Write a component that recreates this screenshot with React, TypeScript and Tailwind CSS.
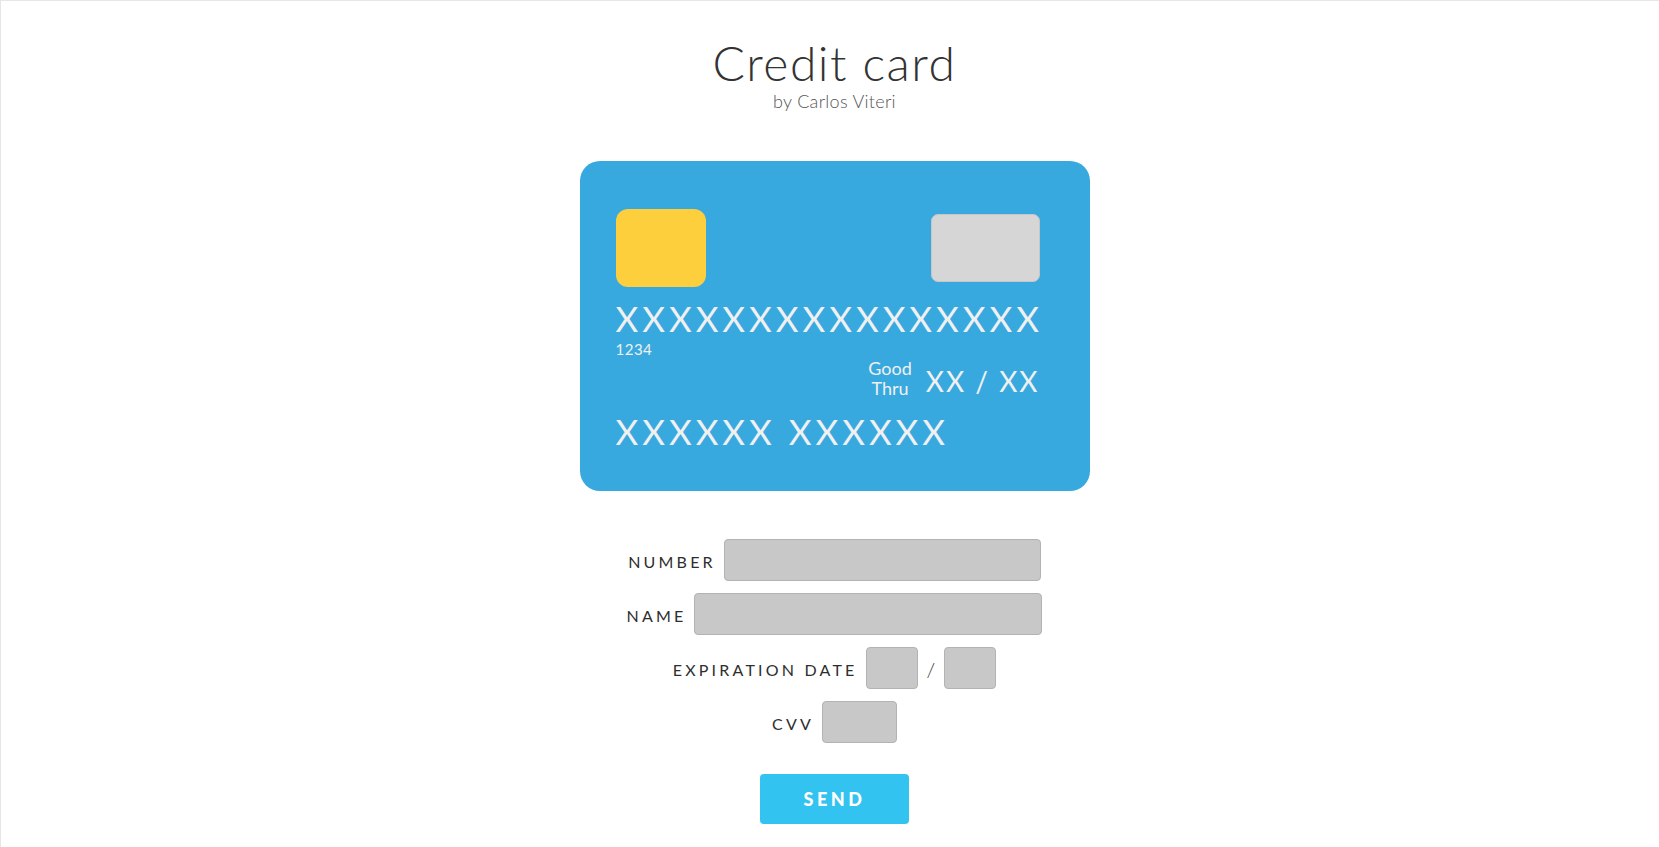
import React from 'react';

const font = { fontFamily: 'Lato, "Open Sans", sans-serif' };

function Card() {
  return (
    <div className="w-[510px] h-[330px] rounded-[20px] bg-[#38a9df] pt-[48px] pl-[36px] pr-[50px] text-[#f0f0f0]">
      <div className="flex items-center justify-between h-[78px]">
        <div className="w-[90px] h-[78px] rounded-[12px] bg-[#fecf3d]" />
        <div className="w-[109px] h-[68px] rounded-[7px] bg-[#d6d6d6] border border-[#c6c6c6]" />
      </div>
      <div className="mt-[14px] text-[35px] leading-[35px] tracking-[4px] whitespace-nowrap">XXXXXXXXXXXXXXXX</div>
      <div className="mt-[6px] text-[15px] leading-[14px] tracking-[0.5px]">1234</div>
      <div className="mt-[2px] flex justify-end items-start gap-[14px]">
        <div className="text-center text-[18px] leading-[20px]">
          <div>Good</div>
          <div>Thru</div>
        </div>
        <div className="mt-[9px] text-[28px] leading-[28px] tracking-[2px] whitespace-nowrap">XX / XX</div>
      </div>
      <div className="mt-[16px] text-[35px] leading-[35px] tracking-[4px] whitespace-nowrap">XXXXXX XXXXXX</div>
    </div>
  );
}

function Input({ width }: { width: string }) {
  return <div className={`${width} h-[42px] rounded-[4px] bg-[#c8c8c8] border border-[#b3b3b3]`} />;
}

function Label({ children }: { children: React.ReactNode }) {
  return <span className="text-[16px] tracking-[3.2px] text-[#2e2e2e] pt-[4px]">{children}</span>;
}

export default function App() {
  return (
    <div style={font} className="min-h-[847px] bg-white border-t border-l border-[#e6e6e6] pl-[9px] flex flex-col items-center">
      <h1 className="mt-[38px] text-[48px] leading-[48px] font-light tracking-[1.5px] text-[#333]">Credit card</h1>
      <p className="mt-[4px] text-[18px] leading-[20px] font-light tracking-[0.3px] text-[#555]">by Carlos Viteri</p>
      <div className="mt-[50px]">
        <Card />
      </div>
      <div className="mt-[48px] flex flex-col gap-[12px]">
        <div className="flex items-center justify-center gap-[8px]">
          <Label>NUMBER</Label>
          <Input width="w-[317px]" />
        </div>
        <div className="flex items-center justify-center gap-[8px]">
          <Label>NAME</Label>
          <Input width="w-[348px]" />
        </div>
        <div className="flex items-center justify-center gap-[8px]">
          <Label>EXPIRATION DATE</Label>
          <Input width="w-[52px]" />
          <span className="text-[20px] font-light text-[#333] px-[1px] pt-[2px]">/</span>
          <Input width="w-[52px]" />
        </div>
        <div className="flex items-center justify-center gap-[8px]">
          <Label>CVV</Label>
          <Input width="w-[75px]" />
        </div>
      </div>
      <button className="mt-[31px] w-[149px] h-[50px] rounded-[4px] bg-[#33c3f0] text-white font-black text-[18px] tracking-[3.5px]">
        SEND
      </button>
    </div>
  );
}
